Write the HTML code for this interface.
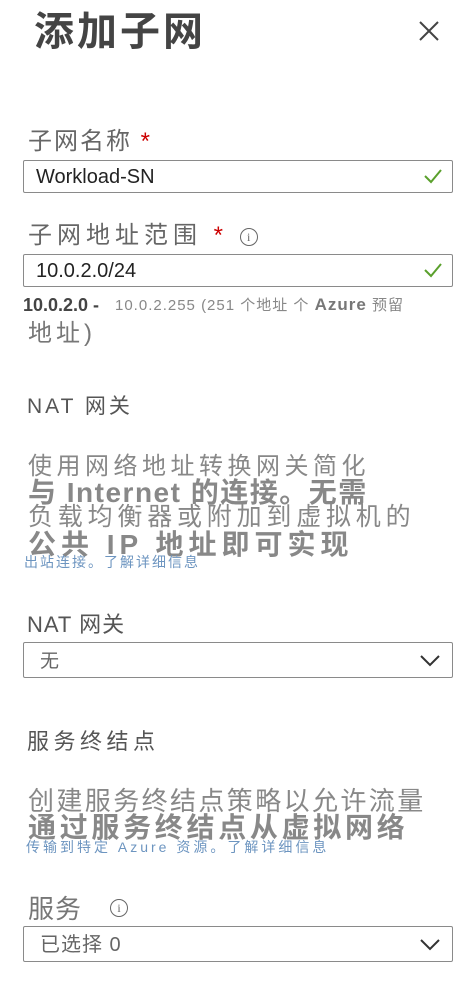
<!DOCTYPE html>
<html><head><meta charset="utf-8"><style>
body{margin:0;width:476px;height:984px;background:#fff;position:relative;overflow:hidden;font-family:"Liberation Sans","Noto Sans CJK SC",sans-serif;color:#555}
.a{position:absolute;white-space:nowrap;line-height:1}
.box{position:absolute;left:23px;width:430px;border:1px solid #8a8a8a;border-radius:2px;box-sizing:border-box}
.chk{position:absolute;right:10px;top:7px}
.info{display:inline-block;width:16px;height:16px;border:1.5px solid #666;border-radius:50%;font-size:12px;text-align:center;line-height:16px;color:#666;font-family:"Liberation Serif",serif;vertical-align:middle;letter-spacing:0}
</style></head><body>
<div class="a" style="left:34px;top:12px;font-size:40px;font-weight:bold;color:#444;letter-spacing:3px">添加子网</div>
<svg class="a" style="left:418px;top:20px" width="22" height="22"><path d="M2 2L20 20M20 2L2 20" stroke="#444" stroke-width="2"/></svg>

<div class="a" style="left:28px;top:130px;font-size:24px;color:#666;letter-spacing:2px">子网名称 <span style="color:#c00">*</span></div>
<div class="box" style="top:160px;height:33px"><span class="a" style="left:12px;top:6px;font-size:20px;color:#222">Workload-SN</span>
<svg class="chk" width="18" height="16"><path d="M1 8L7 14L17 2" stroke="#5aa02c" stroke-width="2" fill="none"/></svg></div>

<div class="a" style="left:28px;top:224px;font-size:24px;color:#666;letter-spacing:5px">子网地址范围 <span style="color:#c00">*</span> <span class="info">i</span></div>
<div class="box" style="top:254px;height:33px"><span class="a" style="left:12px;top:6px;font-size:20px;color:#222">10.0.2.0/24</span>
<svg class="chk" width="18" height="16"><path d="M1 8L7 14L17 2" stroke="#5aa02c" stroke-width="2" fill="none"/></svg></div>

<div class="a" style="left:23px;top:296px;font-size:18px;font-weight:bold;color:#444">10.0.2.0 -</div>
<div class="a" style="left:115px;top:296px;font-size:15px;color:#888;letter-spacing:1px">10.0.2.255 (251 个地址 个 <b style="font-size:17px;color:#777">Azure</b> 预留</div>
<div class="a" style="left:28px;top:322px;font-size:24px;color:#777;letter-spacing:4px">地址)</div>

<div class="a" style="left:27px;top:396px;font-size:21px;color:#555;letter-spacing:3px">NAT 网关</div>

<div class="a" style="left:28px;top:455px;font-size:24px;color:#888;letter-spacing:4.5px">使用网络地址转换网关简化</div>
<div class="a" style="left:28px;top:479px;font-size:28px;color:#888;font-weight:bold;letter-spacing:1.5px">与 Internet 的连接。无需</div>
<div class="a" style="left:28px;top:505px;font-size:25px;color:#888;letter-spacing:4.8px">负载均衡器或附加到虚拟机的</div>
<div class="a" style="left:28px;top:531px;font-size:28px;color:#888;font-weight:bold;letter-spacing:5px">公共 IP 地址即可实现</div>
<div class="a" style="left:24px;top:555px;font-size:14px;color:#6d95c0;letter-spacing:2px">出站连接。了解详细信息</div>

<div class="a" style="left:27px;top:614px;font-size:22px;color:#555;letter-spacing:1px">NAT 网关</div>
<div class="box" style="top:642px;height:36px"><span class="a" style="left:16px;top:9px;font-size:19px;color:#666">无</span>
<svg class="a" style="right:12px;top:12px" width="20" height="12"><path d="M1 1L10 10L19 1" stroke="#333" stroke-width="2" fill="none"/></svg></div>

<div class="a" style="left:27px;top:731px;font-size:22px;color:#555;letter-spacing:4.5px">服务终结点</div>
<div class="a" style="left:28px;top:788px;font-size:26px;color:#888;letter-spacing:2.4px">创建服务终结点策略以允许流量</div>
<div class="a" style="left:28px;top:814px;font-size:28px;color:#888;font-weight:bold;letter-spacing:3.7px">通过服务终结点从虚拟网络</div>
<div class="a" style="left:26px;top:840px;font-size:14px;color:#6d95c0;letter-spacing:3px">传输到特定 Azure 资源。了解详细信息</div>

<div class="a" style="left:28px;top:896px;font-size:26px;color:#777;letter-spacing:1px">服务</div>
<span class="a info" style="left:110px;top:899px">i</span>
<div class="box" style="top:926px;height:36px"><span class="a" style="left:16px;top:8px;font-size:20px;color:#666;letter-spacing:1px">已选择 0</span>
<svg class="a" style="right:12px;top:12px" width="20" height="12"><path d="M1 1L10 10L19 1" stroke="#333" stroke-width="2" fill="none"/></svg></div>
</body></html>
